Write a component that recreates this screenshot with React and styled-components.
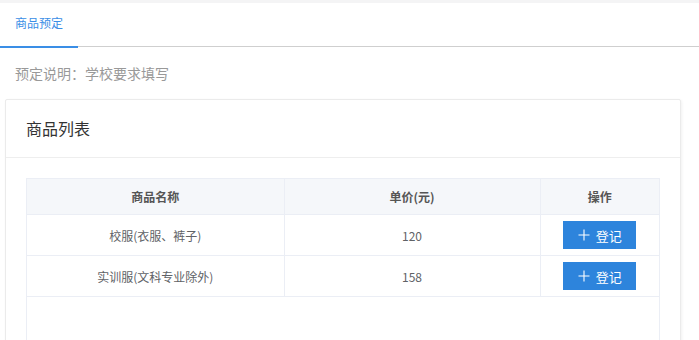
import React from 'react'
import styled, { createGlobalStyle } from 'styled-components'

const Global = createGlobalStyle`
  body {
    margin: 0;
    background: #fff;
    font-family: "Microsoft YaHei", "Noto Sans CJK SC", "Noto Sans", sans-serif;
  }
`

const Page = styled.div`
  border-top: 3px solid #f4f4f5;
`

const TabBar = styled.div`
  display: flex;
  height: 43px;
  border-bottom: 1px solid #cfcfcf;
`

const Tab = styled.div`
  position: relative;
  padding: 0 15px;
  white-space: nowrap;
  line-height: 46px;
  margin-top: -3px;
  font-size: 12px;
  color: ${p => (p.active ? '#3a8ee6' : '#666')};
  &::after {
    content: '';
    display: ${p => (p.active ? 'block' : 'none')};
    position: absolute;
    left: 0;
    right: 0;
    bottom: -2px;
    height: 2px;
    background: #3a8ee6;
  }
`

const Note = styled.div`
  padding: 16px 15px;
  line-height: 20px;
  font-size: 14px;
  color: #999;
`

const Card = styled.div`
  margin: 0 18px 0 5px;
  border: 1px solid #ebebeb;
  border-radius: 2px;
  box-shadow: 1px 1px 3px rgba(0, 0, 0, 0.06);
  background: #fff;
`

const CardHeader = styled.div`
  height: 57px;
  line-height: 57px;
  padding: 0 20px;
  font-size: 16px;
  color: #333;
  border-bottom: 1px solid #eee;
`

const CardBody = styled.div`
  padding: 20px;
`

const TableWrap = styled.div`
  min-height: 200px;
  border: 1px solid #ebeef5;
  border-top: none;
`

const Table = styled.table`
  width: 100%;
  border-collapse: collapse;
  table-layout: fixed;
  font-size: 12px;
`

const HeadCell = styled.th`
  height: 35px;
  padding: 0;
  background: #f5f7fa;
  color: #555;
  font-weight: bold;
  border: 1px solid #ebeef5;
  border-left: ${p => (p.first ? 'none' : '1px solid #ebeef5')};
  border-right: ${p => (p.last ? 'none' : '1px solid #ebeef5')};
`

const Cell = styled.td`
  height: 40px;
  padding: 0;
  text-align: center;
  color: #606266;
  border: 1px solid #ebeef5;
  border-left: ${p => (p.first ? 'none' : '1px solid #ebeef5')};
  border-right: ${p => (p.last ? 'none' : '1px solid #ebeef5')};
`

const Button = styled.button`
  display: inline-flex;
  align-items: center;
  justify-content: center;
  gap: 6px;
  width: 73px;
  height: 28px;
  border: none;
  border-radius: 0;
  background: #2d84dc;
  color: #fff;
  font-family: inherit;
  font-size: 13px;
  cursor: pointer;
`

const Plus = styled.svg`
  width: 12px;
  height: 12px;
`

const goods = [
  { id: 1, name: '校服(衣服、裤子)', price: 120 },
  { id: 2, name: '实训服(文科专业除外)', price: 158 },
]

function App() {
  return (
    <Page>
      <Global />
      <TabBar>
        <Tab active>商品预定</Tab>
      </TabBar>
      <Note>预定说明：学校要求填写</Note>
      <Card>
        <CardHeader>商品列表</CardHeader>
        <CardBody>
          <TableWrap>
            <Table>
              <colgroup>
                <col style={{ width: 257 }} />
                <col style={{ width: 256 }} />
                <col />
              </colgroup>
              <thead>
                <tr>
                  <HeadCell first>商品名称</HeadCell>
                  <HeadCell>单价(元)</HeadCell>
                  <HeadCell last>操作</HeadCell>
                </tr>
              </thead>
              <tbody>
                {goods.map(({ id, name, price }) => (
                  <tr key={id}>
                    <Cell first>{name}</Cell>
                    <Cell>{price}</Cell>
                    <Cell last>
                      <Button>
                        <Plus viewBox="0 0 12 12">
                          <path d="M6 0.5v11M0.5 6h11" stroke="#fff" strokeWidth="1.1" fill="none" />
                        </Plus>
                        登记
                      </Button>
                    </Cell>
                  </tr>
                ))}
              </tbody>
            </Table>
          </TableWrap>
        </CardBody>
      </Card>
    </Page>
  )
}

export default App
